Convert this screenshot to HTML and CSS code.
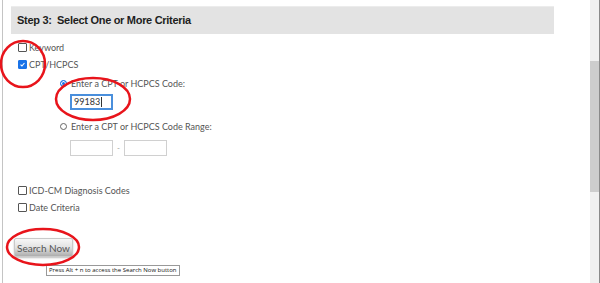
FILE: index.html
```html
<!DOCTYPE html>
<html>
<head>
    <meta charset="UTF-8">
    <title>Search Criteria</title>
    <link rel="stylesheet" href="styles.css">
</head>
<body>
    <div class="frame">
        <div class="page">
            <div class="step-header">Step 3:&nbsp; Select One or More Criteria</div>

            <div class="criteria">
                <div class="opt"><span class="box"></span>Keyword</div>
                <div class="opt"><span class="box checked"><svg viewBox="0 0 9 9"><path d="M2 4.6 L3.8 6.4 L7 2.6" fill="none" stroke="#fff" stroke-width="1.4"/></svg></span>CPT/HCPCS</div>

                <div class="sub">
                    <div class="opt"><span class="radio on"></span>Enter a CPT or HCPCS Code:</div>
                    <div class="field-row">
                        <div class="field focused">99183<span class="caret"></span></div>
                    </div>
                    <div class="opt range-opt"><span class="radio"></span>Enter a CPT or HCPCS Code Range:</div>
                    <div class="field-row range">
                        <div class="field"></div>
                        <span class="dash">-</span>
                        <div class="field"></div>
                    </div>
                </div>

                <div class="opt lower"><span class="box"></span>ICD-CM Diagnosis Codes</div>
                <div class="opt"><span class="box"></span>Date Criteria</div>

                <button class="search-btn">Search Now</button>
            </div>

            <div class="tip">Press Alt + n to access the Search Now button</div>

            <svg class="marks" width="600" height="283" viewBox="0 0 600 283">
                <ellipse cx="23" cy="64" rx="22" ry="23" />
                <ellipse cx="93" cy="99" rx="37" ry="21" />
                <ellipse cx="43" cy="247" rx="36" ry="18" />
            </svg>
        </div>
        <div class="scrollbar"><div class="thumb"></div></div>
    </div>
</body>
</html>
```

FILE: styles.css
```css
body {
    margin: 0;
    width: 600px;
    height: 283px;
    overflow: hidden;
    background-color: #fff;
    font-family: "Lato", "Liberation Sans", sans-serif;
    color: #555;
}

.frame {
    display: flex;
    height: 283px;
}

.page {
    flex: 1;
    margin-left: 2px;
    border-left: 1px solid #c4c4c4;
    padding: 6px 36px 0 8px;
}

.step-header {
    height: 27px;
    line-height: 27px;
    background-color: #e3e3e3;
    border-top: 1px solid #ececec;
    padding-left: 6px;
    font-family: "Liberation Sans", sans-serif;
    font-weight: bold;
    font-size: 11px;
    letter-spacing: -0.3px;
    color: #1e1e1e;
}

.criteria {
    margin-top: 5px;
    padding-left: 7px;
    font-size: 9px;
}

.opt {
    display: flex;
    align-items: center;
    height: 17px;
    gap: 2px;
}

/* checkboxes */
.box {
    width: 7px;
    height: 7px;
    border: 1px solid #555;
    border-radius: 1px;
    background-color: #fff;
    display: flex;
}

.box.checked {
    background-color: #1a73e8;
    border-color: #1a73e8;
}

.box svg {
    width: 7px;
    height: 7px;
}

/* radio buttons */
.radio {
    width: 5px;
    height: 5px;
    border: 1px solid #666;
    border-radius: 50%;
    margin-right: 2px;
}

.radio.on {
    border-color: #1a73e8;
    background-color: #1a73e8;
    box-shadow: inset 0 0 0 1px #fff;
}

.sub {
    padding-left: 42px;
    margin-top: 2px;
}

.field-row {
    display: flex;
    align-items: center;
    margin-top: 2px;
    padding-left: 10px;
}

.field {
    width: 39px;
    height: 14px;
    border: 1px solid #d0d0d0;
    font-size: 9px;
    line-height: 14px;
    padding-left: 2px;
    color: #333;
    display: flex;
    align-items: center;
    box-sizing: content-box;
}

.field.focused {
    width: 37px;
    height: 12px;
    border: 2px solid #4a8fdc;
}

.caret {
    width: 1px;
    height: 10px;
    background-color: #333;
    margin-left: 1px;
}

.range-opt {
    margin-top: 8px;
}

.field-row.range {
    margin-top: 5px;
}

.dash {
    width: 11px;
    text-align: center;
    color: #999;
    font-size: 8px;
}

.lower {
    margin-top: 26px;
}

.search-btn {
    display: block;
    margin-top: 22px;
    margin-left: -4px;
    width: 59px;
    height: 19px;
    padding: 0;
    border: 1px solid #c9c9c9;
    border-radius: 2px;
    background: linear-gradient(#f7f7f7, #e2e2e2 50%, #adadad);
    box-shadow: 0 1px 2px rgba(0,0,0,0.25);
    font-family: "Lato", "Liberation Sans", sans-serif;
    font-size: 10px;
    color: #555;
}

/* hint shown over the page below the button */
.tip {
    position: absolute;
    left: 46px;
    top: 265px;
    height: 9px;
    padding: 0 2px;
    border: 1px solid #999;
    background-color: #fff;
    font-family: "Open Sans", sans-serif;
    font-size: 6px;
    line-height: 9px;
    color: #111;
    white-space: nowrap;
}

/* red highlight rings drawn on top */
.marks {
    position: absolute;
    left: 0;
    top: 0;
    pointer-events: none;
}

.marks ellipse {
    fill: none;
    stroke: #e8141b;
    stroke-width: 2.5;
}

.scrollbar {
    width: 9px;
    background-color: #f0f0f0;
    border-right: 1px solid #8a8a8a;
}

.thumb {
    margin-top: 61px;
    height: 131px;
    background-color: #cdcdcd;
}
```
